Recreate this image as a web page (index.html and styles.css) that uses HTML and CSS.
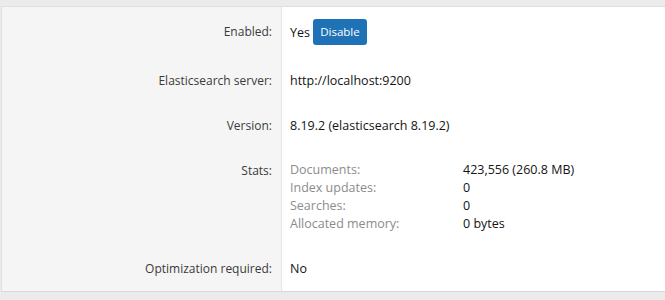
FILE: index.html
```html
<!DOCTYPE html>
<html>
<head>
<meta charset="utf-8">
<link rel="stylesheet" href="styles.css">
</head>
<body>
<div class="panel">
  <div class="row">
    <div class="label">Enabled:</div>
    <div class="value"><span class="yes">Yes</span><button class="btn">Disable</button></div>
  </div>
  <div class="row">
    <div class="label">Elasticsearch server:</div>
    <div class="value">http://localhost:9200</div>
  </div>
  <div class="row">
    <div class="label">Version:</div>
    <div class="value">8.19.2 (elasticsearch 8.19.2)</div>
  </div>
  <div class="row">
    <div class="label">Stats:</div>
    <div class="value">
      <dl class="stats">
        <dt>Documents:</dt><dd>423,556 (260.8 MB)</dd>
        <dt>Index updates:</dt><dd>0</dd>
        <dt>Searches:</dt><dd>0</dd>
        <dt>Allocated memory:</dt><dd>0 bytes</dd>
      </dl>
    </div>
  </div>
  <div class="row">
    <div class="label">Optimization required:</div>
    <div class="value">No</div>
  </div>
</div>
</body>
</html>
```

FILE: styles.css
```css
html, body {
  margin: 0;
  padding: 0;
  background: #ebebeb;
}
body {
  font-family: "Open Sans", "Noto Sans", sans-serif;
  font-size: 12px;
  color: #141414;
  padding-top: 6px;
  padding-left: 1px;
}
.panel {
  background: #fff;
  border-top: 1px solid #e0e0e0;
  border-bottom: 1px solid #d8d8d8;
  border-left: 1px solid #e0e0e0;
}
.row {
  display: grid;
  grid-template-columns: 280px 1fr;
}
.label {
  background: #f5f5f5;
  border-right: 1px solid #e6e6e6;
  text-align: right;
  padding: 13px 9px 13px 0;
  line-height: 19px;
  color: #3a3a3a;
}
.row:first-child .label {
  padding-top: 15px;
  padding-bottom: 15px;
}
.value {
  padding: 13px 8px;
  line-height: 19px;
  font-size: 12.5px;
}
.row:first-child .value {
  padding-top: 12px;
  padding-bottom: 13px;
  display: flex;
  align-items: center;
}
.yes {
  margin-right: 3px;
}
.btn {
  font-family: "Open Sans", "Noto Sans", sans-serif;
  font-size: 11.5px;
  color: #fff;
  background: #1f72b6;
  border: none;
  border-radius: 3px;
  height: 26px;
  width: 54px;
  padding: 0;
  line-height: 26px;
}
.stats {
  margin: 0;
  display: grid;
  grid-template-columns: 173px 1fr;
  line-height: 18px;
}
.stats dt {
  color: #8c8c8c;
}
.stats dd {
  margin: 0;
}
```
